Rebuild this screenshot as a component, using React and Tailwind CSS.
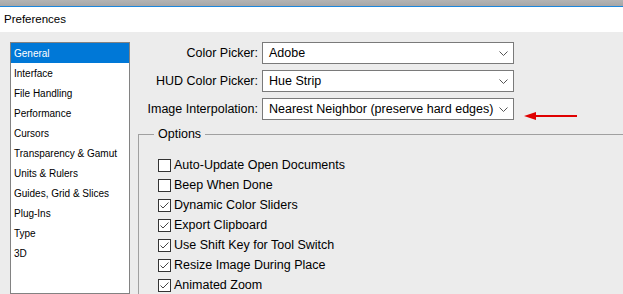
import React from 'react';

const categories = [
  'General',
  'Interface',
  'File Handling',
  'Performance',
  'Cursors',
  'Transparency & Gamut',
  'Units & Rulers',
  'Guides, Grid & Slices',
  'Plug-Ins',
  'Type',
  '3D',
];

const pickers = [
  { label: 'Color Picker:', value: 'Adobe' },
  { label: 'HUD Color Picker:', value: 'Hue Strip' },
  { label: 'Image Interpolation:', value: 'Nearest Neighbor (preserve hard edges)' },
];

const options = [
  { label: 'Auto-Update Open Documents', checked: false },
  { label: 'Beep When Done', checked: false },
  { label: 'Dynamic Color Sliders', checked: true },
  { label: 'Export Clipboard', checked: true },
  { label: 'Use Shift Key for Tool Switch', checked: true },
  { label: 'Resize Image During Place', checked: true },
  { label: 'Animated Zoom', checked: true },
];

function Chevron() {
  return (
    <svg width="9" height="5" viewBox="0 0 9 5" className="shrink-0">
      <path d="M0.5 0.5 L4.5 4.5 L8.5 0.5" fill="none" stroke="#555" strokeWidth="1" />
    </svg>
  );
}

function Checkbox({ checked }) {
  return (
    <span className="w-[13px] h-[13px] border border-[#333] bg-white flex items-center justify-center shrink-0">
      {checked && (
        <svg width="11" height="11" viewBox="0 0 11 11">
          <path d="M1.5 5.5 L4 8 L9.5 2.5" fill="none" stroke="#444" strokeWidth="1" />
        </svg>
      )}
    </span>
  );
}

export default function App() {
  return (
    <div className="w-[623px] h-[294px] overflow-hidden flex flex-col bg-[#ececec] font-['Liberation_Sans',Arial,sans-serif] text-[#111]">
      {/* window chrome */}
      <div className="h-[6px] bg-gradient-to-b from-[#b4b4b4] to-[#a6a6a6] shrink-0" />
      <div className="h-[1px] bg-[#1c86dc] shrink-0" />
      <div className="h-[25px] bg-white flex items-center pl-[4px] text-[11.5px] text-black shrink-0">
        Preferences
      </div>

      <div className="flex flex-1 min-h-0">
        {/* category list */}
        <div className="ml-[10px] mt-[10px] w-[120px] border border-[#828282] bg-white shrink-0 text-[10px]">
          {categories.map((c, i) => (
            <div
              key={c}
              className={
                i === 0
                  ? 'h-[20px] flex items-center pl-[3px] bg-[#0078d7] text-white'
                  : 'h-[20px] flex items-center pl-[3px] text-black'
              }
            >
              {c}
            </div>
          ))}
        </div>

        {/* settings */}
        <div className="flex-1 flex flex-col pt-[10px] text-[12.5px] text-black relative">
          <div className="flex flex-col gap-[6px]">
            {pickers.map((p) => (
              <div key={p.label} className="flex items-center">
                <div className="w-[132px] text-right pr-[4px]">{p.label}</div>
                <div className="w-[252px] h-[22px] border border-[#7a7a7a] bg-white flex items-center justify-between pl-[6px] pr-[5px]">
                  <span>{p.value}</span>
                  <Chevron />
                </div>
              </div>
            ))}
          </div>

          {/* annotation arrow */}
          <svg className="absolute left-[394px] top-[78px]" width="54" height="12" viewBox="0 0 54 12">
            <path d="M0 6 L12 2 L12 10 Z" fill="#e00000" />
            <rect x="11" y="5" width="42" height="2" fill="#e00000" />
          </svg>

          <fieldset className="ml-[8px] mt-[6px] border-t border-l border-[#a0a0a0] pt-[13px] flex-1">
            <legend className="ml-[15px] px-[4px] leading-[16px]">Options</legend>
            <div className="flex flex-col pl-[19px]">
              {options.map((o) => (
                <div key={o.label} className="h-[20px] flex items-center gap-[3px]">
                  <Checkbox checked={o.checked} />
                  <span>{o.label}</span>
                </div>
              ))}
            </div>
          </fieldset>
        </div>
      </div>
    </div>
  );
}
